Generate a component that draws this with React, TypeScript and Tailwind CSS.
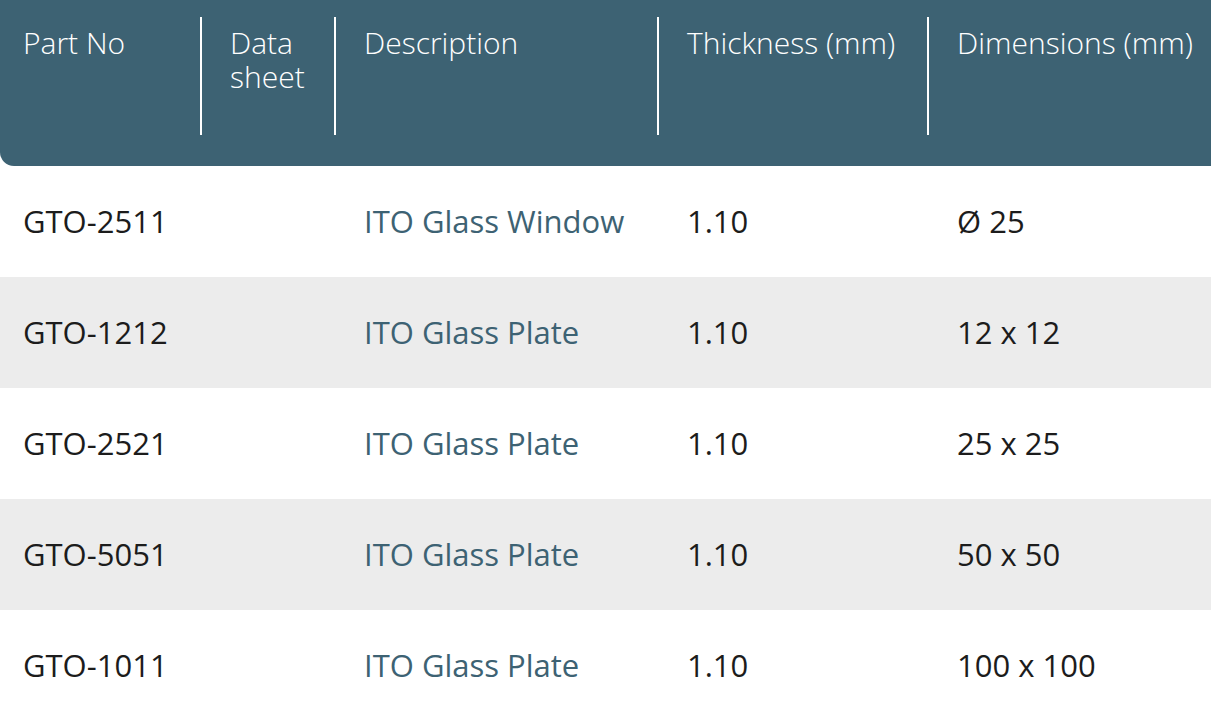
import React from "react";

const rows = [
  ["GTO-2511", "ITO Glass Window", "1.10", "Ø 25"],
  ["GTO-1212", "ITO Glass Plate", "1.10", "12 x 12"],
  ["GTO-2521", "ITO Glass Plate", "1.10", "25 x 25"],
  ["GTO-5051", "ITO Glass Plate", "1.10", "50 x 50"],
  ["GTO-1011", "ITO Glass Plate", "1.10", "100 x 100"],
];

const cols = "grid grid-cols-[200px_134px_323px_270px_1fr]";

function HeadCell({ children, first }: { children: React.ReactNode; first?: boolean }) {
  return (
    <div className="pt-[17px]">
      <div
        className={
          first
            ? "h-[118px] pl-[23px] pt-[9px] leading-[34px]"
            : "h-[118px] border-l-2 border-white pl-[28px] pt-[9px] leading-[34px]"
        }
      >
        {children}
      </div>
    </div>
  );
}

export default function App() {
  return (
    <div
      className="w-[1211px] h-[723px] overflow-hidden bg-white"
      style={{ fontFamily: '"Open Sans", "Noto Sans", sans-serif' }}
    >
      <div className={`${cols} h-[166px] bg-[#3d6273] rounded-bl-[14px] text-white font-light text-[30px] whitespace-nowrap`}>
        <HeadCell first>Part No</HeadCell>
        <HeadCell>
          Data
          <br />
          sheet
        </HeadCell>
        <HeadCell>Description</HeadCell>
        <HeadCell>Thickness (mm)</HeadCell>
        <HeadCell>Dimensions (mm)</HeadCell>
      </div>
      {rows.map((r, i) => (
        <div
          key={i}
          className={`${cols} h-[111px] items-center text-[31px] text-[#1c1c1c] whitespace-nowrap ${
            i % 2 === 1 ? "bg-[#ececec]" : "bg-white"
          }`}
        >
          <div className="pl-[23px]">{r[0]}</div>
          <div />
          <div className="pl-[30px] text-[#3d6273]">{r[1]}</div>
          <div className="pl-[30px]">{r[2]}</div>
          <div className="pl-[30px]">{r[3]}</div>
        </div>
      ))}
    </div>
  );
}
